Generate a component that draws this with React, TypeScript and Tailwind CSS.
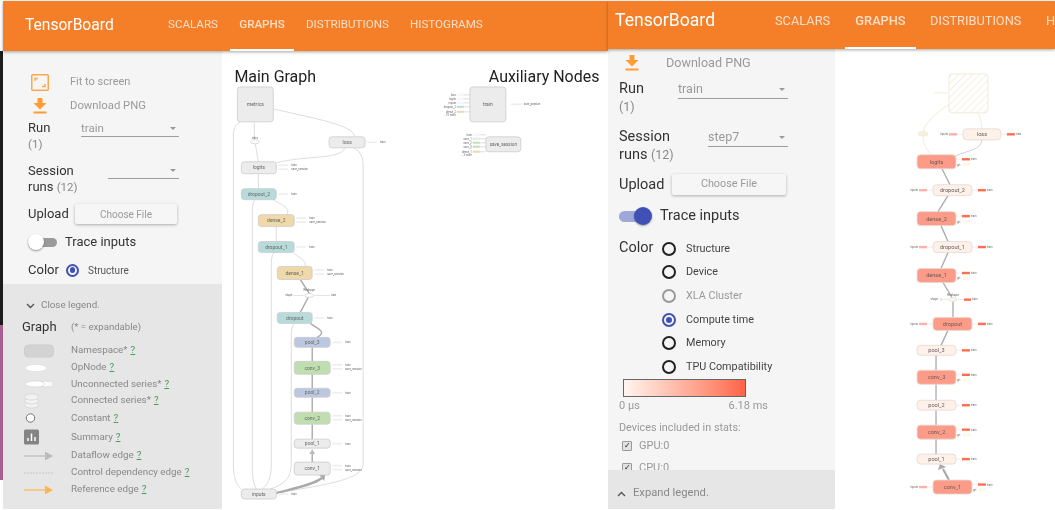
import React from 'react';

const TABS_LEFT = [
  { label: 'Scalars', className: 'w-[74px] pl-[12px] border-b-2 border-transparent' },
  { label: 'Graphs', className: 'w-[64px] justify-center border-b-2 border-white text-white font-medium' },
  { label: 'Distributions', className: 'w-[104px] pl-[12px] border-b-2 border-transparent' },
  { label: 'Histograms', className: 'w-[84px] pl-[12px] border-b-2 border-transparent' },
];

const TABS_RIGHT = [
  { label: 'Scalars', className: 'w-[85px] pl-[15px] border-b-2 border-transparent' },
  { label: 'Graphs', className: 'w-[71px] justify-center border-b-2 border-white text-white font-medium' },
  { label: 'Distributions', className: 'w-[116px] pl-[14px] border-b-2 border-transparent' },
  { label: 'Histograms', className: 'w-[100px] pl-[14px] border-b-2 border-transparent' },
];

const GRAPH_NODES = [
  { x: 237, y: 87, w: 36, h: 35, label: 'metrics', fill: '#ececec', size: 5.2 },
  { x: 329, y: 137, w: 36, h: 11, label: 'loss', fill: '#ececec', size: 5 },
  { x: 241, y: 162, w: 35, h: 12, label: 'logits', fill: '#ececec', size: 5 },
  { x: 241, y: 189, w: 35, h: 11, label: 'dropout_2', fill: '#b7dada', size: 5 },
  { x: 258, y: 215, w: 36, h: 12, label: 'dense_2', fill: '#f0d9a8', size: 5 },
  { x: 258, y: 242, w: 36, h: 11, label: 'dropout_1', fill: '#b7dada', size: 5 },
  { x: 277, y: 267, w: 35, h: 13, label: 'dense_1', fill: '#f0d9a8', size: 5 },
  { x: 277, y: 313, w: 35, h: 11, label: 'dropout', fill: '#b7dada', size: 5 },
  { x: 294, y: 338, w: 36, h: 10, label: 'pool_3', fill: '#bcc8e0', size: 5 },
  { x: 294, y: 362, w: 36, h: 13, label: 'conv_3', fill: '#c0dfb0', size: 5 },
  { x: 294, y: 389, w: 36, h: 9, label: 'pool_2', fill: '#bcc8e0', size: 5 },
  { x: 294, y: 413, w: 36, h: 12, label: 'conv_2', fill: '#c0dfb0', size: 5 },
  { x: 294, y: 440, w: 36, h: 9, label: 'pool_1', fill: '#ececec', size: 5 },
  { x: 294, y: 463, w: 36, h: 13, label: 'conv_1', fill: '#ececec', size: 5 },
  { x: 241, y: 490, w: 35, h: 10, label: 'inputs', fill: '#ececec', size: 5 },
  { x: 470, y: 87, w: 36, h: 35, label: 'train', fill: '#ececec', size: 5 },
  { x: 486, y: 137, w: 35, h: 15, label: 'save_session', fill: '#ececec', size: 4.6 },
];

const THIN_EDGES = [
  'M355,137 C352,125 320,120 273,109',
  'M276,163 C310,155 340,160 345,148',
  'M241,490 C235,485 233,478 233,465 L233,135 C233,128 236,124 240,122',
  'M256,490 C253,485 252,478 252,465 L252,210 C252,205 253,202 255,200',
  'M262,490 C268,485 271,478 271,465 L271,265 C271,258 272,255 274,253',
  'M270,490 C285,485 291,478 291,465 L291,335 C291,330 292,327 294,324',
  'M276,494 C330,485 363,480 363,465 L363,165 C363,155 358,150 353,148',
  'M254,122 L254,140',
  'M255,144 L258,162',
  'M258,189 L258,174',
  'M287,215 C290,207 280,205 273,200',
  'M276,242 L276,227',
  'M305,267 C306,260 298,258 293,253',
];

const THICK_EDGES = [
  'M300,280 L309,294',
  'M308,298 L300,313',
  'M317,338 C327,332 318,330 310,324',
  'M312,362 L312,348',
  'M312,389 L312,375',
  'M312,413 L312,398',
  'M312,440 L312,425',
  'M312,463 L312,453',
];

const AUX_LEFT = [
  { y: 95, label: 'loss', fill: '#fff' },
  { y: 99, label: 'logits', fill: '#fff' },
  { y: 103, label: 'inputs', fill: '#fff' },
  { y: 107, label: 'dropout_2', fill: '#b7dada' },
  { y: 112, label: 'dense_2', fill: '#f0d9a8' },
  { y: 115, label: '... 10 more', fill: 'none' },
  { y: 135, label: 'train', fill: '#fff' },
  { y: 139, label: 'conv_1', fill: '#ececec' },
  { y: 143, label: 'conv_2', fill: '#c0dfb0' },
  { y: 147, label: 'conv_3', fill: '#c0dfb0' },
  { y: 152, label: 'dense_1', fill: '#f0d9a8' },
  { y: 155, label: '... 3 more', fill: 'none' },
];

const CORAL = '#fc9c88';
const PALE = '#fdf1ea';

const TIME_NODES = [
  { x: 963, y: 129, w: 38, h: 11, label: 'loss', fill: PALE, inputs: true },
  { x: 917, y: 155, w: 39, h: 14, label: 'logits', fill: CORAL, grad: true },
  { x: 933, y: 185, w: 39, h: 11, label: 'dropout_2', fill: PALE, inputs: true },
  { x: 917, y: 212, w: 39, h: 14, label: 'dense_2', fill: CORAL, grad: true },
  { x: 933, y: 242, w: 39, h: 11, label: 'dropout_1', fill: PALE, inputs: true },
  { x: 917, y: 269, w: 39, h: 14, label: 'dense_1', fill: CORAL, grad: true },
  { x: 933, y: 318, w: 39, h: 13, label: 'dropout', fill: CORAL, inputs: true },
  { x: 917, y: 346, w: 39, h: 10, label: 'pool_3', fill: PALE },
  { x: 917, y: 371, w: 39, h: 14, label: 'conv_3', fill: CORAL, grad: true },
  { x: 917, y: 401, w: 39, h: 10, label: 'pool_2', fill: PALE },
  { x: 917, y: 426, w: 39, h: 14, label: 'conv_2', fill: CORAL, grad: true },
  { x: 917, y: 455, w: 39, h: 10, label: 'pool_1', fill: PALE },
  { x: 933, y: 481, w: 39, h: 14, label: 'conv_1', fill: CORAL, inputs: true, grad: true },
];

const TIME_EDGES = [
  'M942,169 L950,185',
  'M948,196 L938,212',
  'M941,226 L948,242',
  'M948,253 L941,269',
  'M943,283 L952,298',
  'M953,302 L953,318',
  'M948,331 L941,346',
  'M936,356 L936,371',
  'M936,385 L936,401',
  'M936,411 L936,426',
  'M936,440 L936,455',
];

const Arrow = ({ x, y, fill = '#bbb', size = 2 }: { x: number; y: number; fill?: string; size?: number }) => (
  <polygon fill={fill} points={`${x - size},${y + size * 1.6} ${x + size},${y + size * 1.6} ${x},${y}`} />
);

const MainGraph = () => (
  <svg className="block h-full w-full" viewBox="222 51 386 459">
    <text x="234" y="82" fontSize="16" fill="#222">Main Graph</text>
    <text x="489" y="82" fontSize="16" fill="#222">Auxiliary Nodes</text>

    {THIN_EDGES.map((d) => (
      <path key={d} d={d} fill="none" stroke="#d4d4d4" strokeWidth="0.8" />
    ))}
    {THICK_EDGES.map((d) => (
      <path key={d} d={d} fill="none" stroke="#aaa" strokeWidth="1.4" />
    ))}
    <path d="M276,494 C295,489 312,486 322,479" fill="none" stroke="#aaa" strokeWidth="2.4" />
    <polygon points="325,476 319,476 324,482" fill="#aaa" />
    <Arrow x={312} y={450} size={3} />

    {/* reshape op */}
    <ellipse cx="254.5" cy="142" rx="4.5" ry="2" fill="#fff" stroke="#bbb" strokeWidth="0.5" />
    <text x="254.5" y="139" fontSize="2.6" textAnchor="middle" fill="#666">index</text>
    <ellipse cx="309" cy="296" rx="4.5" ry="2" fill="#fff" stroke="#bbb" strokeWidth="0.5" />
    <text x="309" y="292" fontSize="3" textAnchor="middle" fill="#666">Reshape</text>
    <text x="292" y="297" fontSize="2.6" textAnchor="end" fill="#666">shape</text>
    <path d="M293,296 L304,296 M314,296 L330,296" stroke="#ddd" strokeWidth="0.8" />
    <text x="331" y="297" fontSize="2.6" fill="#666">train</text>

    {GRAPH_NODES.map((n) => (
      <g key={n.label}>
        <rect x={n.x} y={n.y} width={n.w} height={n.h} rx="3" fill={n.fill} stroke="#ccc" strokeWidth="0.8" />
        <text x={n.x + n.w / 2} y={n.y + n.h / 2 + 1.7} fontSize={n.size} textAnchor="middle" fill="#666">
          {n.label}
        </text>
      </g>
    ))}

    {/* out-of-graph stubs */}
    {GRAPH_NODES.slice(1, 15).map((n) => {
      const isGated = /logits|dense|conv/.test(n.label);
      const stubX = n.x + n.w + 2;
      const cy = n.y + (isGated ? 3.5 : n.h / 2);
      return (
        <g key={n.label}>
          <rect x={stubX} y={cy - 0.8} width="10" height="1.6" fill="#eee" />
          <text x={stubX + 13} y={cy + 1} fontSize="2.8" fill="#666">train</text>
          {isGated && (
            <>
              <rect x={stubX} y={cy + 3.2} width="10" height="1.6" fill="#eee" />
              <text x={stubX + 13} y={cy + 5} fontSize="2.8" fill="#666">save_session</text>
            </>
          )}
        </g>
      );
    })}

    {AUX_LEFT.map((a) => {
      const nodeX = a.y < 120 ? 470 : 486;
      return (
        <g key={a.label}>
          {a.fill !== 'none' && (
            <rect x={nodeX - 13} y={a.y - 0.9} width="7" height="1.8" fill={a.fill} stroke="#ddd" strokeWidth="0.3" />
          )}
          {a.fill !== 'none' && <path d={`M${nodeX - 6},${a.y} L${nodeX},${a.y}`} stroke="#aaa" strokeWidth="0.4" />}
          <text x={nodeX - 14} y={a.y + 1} fontSize="2.7" textAnchor="end" fill="#666">
            {a.label}
          </text>
        </g>
      );
    })}
    <rect x="511" y="103.5" width="11" height="1.8" fill="#eee" />
    <text x="524" y="105.5" fontSize="2.8" fill="#666">save_session</text>
  </svg>
);

const TimeGraph = () => (
  <svg className="block h-full w-full" viewBox="835 49 220 461">
    <defs>
      <pattern id="hatch" width="5" height="5" patternUnits="userSpaceOnUse" patternTransform="rotate(45)">
        <line x1="0" y1="0" x2="0" y2="5" stroke="#f1e9d4" strokeWidth="1.4" />
      </pattern>
    </defs>

    <rect x="949" y="74" width="39" height="39" rx="3" fill="url(#hatch)" stroke="#efe6cf" strokeWidth="0.8" />
    <path d="M934,93 L948,93" stroke="#e8e0c8" strokeWidth="0.6" />
    <path d="M931,155 C924,147 923,140 923,134 C923,124 937,112 949,105" fill="none" stroke="#e9e1c6" strokeWidth="0.7" />
    <path d="M982,129 C982,124 981,118 978,113" fill="none" stroke="#e9e1c6" strokeWidth="0.7" />
    <ellipse cx="923" cy="134" rx="5" ry="2.2" fill="#f6f1df" stroke="#e9e1c6" strokeWidth="0.5" />
    <path d="M956,156 C970,150 981,150 982,140" fill="none" stroke="#ccc" strokeWidth="0.9" />

    {TIME_EDGES.map((d) => (
      <path key={d} d={d} fill="none" stroke="#aaa" strokeWidth="1.3" />
    ))}
    <path d="M949,481 L943,470" stroke="#aaa" strokeWidth="2.2" />
    <polygon points="940,465 938,471 946,468" fill="#aaa" />

    {/* reshape op */}
    <ellipse cx="953" cy="300" rx="4.5" ry="2" fill={PALE} stroke="#ddd" strokeWidth="0.5" />
    <text x="953" y="297" fontSize="3" textAnchor="middle" fill="#666">Reshape</text>
    <text x="938" y="301" fontSize="2.8" textAnchor="end" fill="#666">shape</text>
    <circle cx="941" cy="300" r="1" fill="#fff" stroke="#bbb" strokeWidth="0.4" />
    <path d="M942,300 L948,300 M958,300 L964,300" stroke="#ddd" strokeWidth="0.6" />
    <rect x="964" y="299" width="7" height="2.4" fill="#ff6e54" />
    <text x="972" y="301" fontSize="2.8" fill="#666">train</text>

    {TIME_NODES.map((n) => {
      const right = n.x + n.w;
      const cy = n.y + (n.grad ? 4.5 : n.h / 2);
      return (
        <g key={n.label}>
          <rect x={n.x} y={n.y} width={n.w} height={n.h} rx="3.5" fill={n.fill} stroke="#e6d8d0" strokeWidth="0.8" />
          <text x={n.x + n.w / 2} y={n.y + n.h / 2 + 2} fontSize="5.6" textAnchor="middle" fill="#665a58">
            {n.label}
          </text>
          <path d={`M${right},${cy} L${right + 6},${cy}`} stroke="#ddd" strokeWidth="0.5" />
          <rect x={right + 6} y={cy - 1.2} width="8" height="2.4" fill="#ff6e54" />
          <text x={right + 15} y={cy + 1} fontSize="2.8" fill="#666">train</text>
          {n.grad && (
            <>
              <text x={right + 1} y={cy + 6.5} fontSize="2.8" fill="#666">grt</text>
              <rect x={right + 7} y={cy + 4} width="7" height="2.4" fill="#fdfbe8" stroke="#eee8c8" strokeWidth="0.2" />
            </>
          )}
          {n.inputs && (
            <>
              <text x={n.x - 15} y={n.y + n.h / 2 + 1} fontSize="2.8" textAnchor="end" fill="#666">inputs</text>
              <rect x={n.x - 14} y={n.y + n.h / 2 - 1.2} width="8" height="2.4" fill="#fbb3a6" />
              <path d={`M${n.x - 6},${n.y + n.h / 2} L${n.x},${n.y + n.h / 2}`} stroke="#ddd" strokeWidth="0.5" />
            </>
          )}
        </g>
      );
    })}
  </svg>
);

const Header = ({ tabs, big }: { tabs: { label: string; className: string }[]; big?: boolean }) => (
  <header
    className={`relative z-10 flex shrink-0 items-stretch overflow-hidden bg-[#f57f28] text-white shadow-[0_1px_3px_rgba(0,0,0,0.35)] ${
      big ? 'h-[48px] pl-[7px]' : 'h-[50px] pl-[22px]'
    }`}
  >
    <div className={`flex shrink-0 items-center ${big ? 'w-[145px] pb-[9px] text-[17.6px]' : 'w-[131px] text-[15.6px]'}`}>TensorBoard</div>
    {tabs.map((tab) => (
      <div
        key={tab.label}
        className={`flex shrink-0 items-center uppercase text-white/75 ${big ? 'pb-[7px] text-[12.8px]' : 'text-[11.6px]'} ${tab.className}`}
      >
        {tab.label}
      </div>
    ))}
  </header>
);

const FitIcon = () => (
  <svg width="18" height="17" viewBox="0 0 18 17" fill="none" stroke="#ffa74d">
    <rect x="0.75" y="0.75" width="16.5" height="15.5" rx="1" strokeWidth="1.5" />
    <path d="M4 7 V4.5 H7 M14 10 V12.5 H11" strokeWidth="1.4" />
  </svg>
);

const DownloadIcon = () => (
  <svg width="14" height="16" viewBox="0 0 14 16" fill="#ff9c33">
    <path d="M4.5 0 H9.5 V5 H13.5 L7 11.5 L0.5 5 H4.5 Z" />
    <rect x="0.5" y="13.5" width="13" height="2" />
  </svg>
);

const Caret = () => <span className="h-0 w-0 border-x-[3px] border-t-[3px] border-x-transparent border-t-[#999]" />;

const Dropdown = ({ value, className }: { value?: string; className: string }) => (
  <div className={`flex items-center justify-between border-b border-[#9e9e9e] pr-[3px] text-[#9a9a9a] ${className}`}>
    <span>{value}</span>
    <Caret />
  </div>
);

const Radio = ({ selected, muted, size }: { selected?: boolean; muted?: boolean; size: string }) => (
  <span
    className={`flex shrink-0 items-center justify-center rounded-full border-2 ${size} ${
      selected ? 'border-[#3f51b5]' : muted ? 'border-[#9a9a9a]' : 'border-[#222]'
    }`}
  >
    {selected && <span className="h-[58%] w-[58%] rounded-full bg-[#3f51b5]" />}
  </span>
);

const Help = () => <span className="ml-[3px] text-[#4a9a5a] underline">?</span>;

const LEGEND_ROWS: { label: string; height: string; icon: React.ReactNode }[] = [
  {
    label: 'Namespace*',
    height: 'h-[17px]',
    icon: <rect x="0.5" y="2" width="29" height="12" rx="4" fill="#d3d3d3" stroke="#ccc" />,
  },
  {
    label: 'OpNode',
    height: 'h-[17px]',
    icon: <ellipse cx="12" cy="8" rx="11" ry="3.6" fill="#fff" stroke="#d8d8d8" strokeWidth="0.6" />,
  },
  {
    label: 'Unconnected series*',
    height: 'h-[16px]',
    icon: (
      <g fill="#fff" stroke="#d0d0d0" strokeWidth="0.6">
        <ellipse cx="25" cy="8" rx="4" ry="3" />
        <ellipse cx="21" cy="8" rx="5" ry="3" />
        <ellipse cx="11" cy="8" rx="10" ry="3" />
      </g>
    ),
  },
  {
    label: 'Connected series*',
    height: 'h-[17px]',
    icon: (
      <g fill="#f2f2f2" stroke="#d0d0d0" strokeWidth="0.6">
        <ellipse cx="7.5" cy="12" rx="7" ry="3" />
        <ellipse cx="7.5" cy="8" rx="7" ry="3" />
        <ellipse cx="7.5" cy="4" rx="7" ry="3" />
      </g>
    ),
  },
  {
    label: 'Constant',
    height: 'h-[18px]',
    icon: <circle cx="6.5" cy="8" r="4.2" fill="#fff" stroke="#555" strokeWidth="0.8" />,
  },
  {
    label: 'Summary',
    height: 'h-[20px]',
    icon: (
      <g>
        <rect x="0" y="0.5" width="15" height="15" rx="1.5" fill="#848484" />
        <path d="M4 12 V9 M7.5 12 V4.5 M11 12 V8" stroke="#fff" strokeWidth="1.5" />
      </g>
    ),
  },
  {
    label: 'Dataflow edge',
    height: 'h-[17px]',
    icon: (
      <g fill="#bbb">
        <rect x="0" y="7.4" width="23" height="1.2" />
        <polygon points="21,3.5 29,8 21,12.5" />
      </g>
    ),
  },
  {
    label: 'Control dependency edge',
    height: 'h-[17px]',
    icon: <path d="M0 8 H29" stroke="#c8c8c8" strokeWidth="1" strokeDasharray="2 1" />,
  },
  {
    label: 'Reference edge',
    height: 'h-[17px]',
    icon: (
      <g fill="#ffb74d">
        <rect x="0" y="7.4" width="23" height="1.2" />
        <polygon points="21,3.5 29,8 21,12.5" />
      </g>
    ),
  },
];

const LeftSidebar = () => (
  <aside className="flex h-full w-[219px] shrink-0 flex-col bg-[#f5f5f5]">
    <div className="h-[233px] shrink-0 overflow-hidden pl-[25px] pt-[19px] text-[13px] text-[#333]">
      <div className="flex h-[24px] items-center">
        <div className="ml-[3px] w-[39px]"><FitIcon /></div>
        <span className="text-[11px] text-[#9a9a9a]">Fit to screen</span>
      </div>
      <div className="flex h-[24px] items-center">
        <div className="ml-[5px] w-[37px]"><DownloadIcon /></div>
        <span className="text-[11.3px] text-[#9a9a9a]">Download PNG</span>
      </div>

      <div className="mt-[2px] flex leading-[16px]">
        <div className="w-[53px]">
          Run
          <div className="text-[11.5px] text-[#8a8a8a]">(1)</div>
        </div>
        <Dropdown value="train" className="h-[17px] w-[98px] text-[11.5px]" />
      </div>

      <div className="mt-[11px] flex leading-[16px]">
        <div className="w-[80px]">
          Session
          <div>
            runs <span className="text-[11.5px] text-[#8a8a8a]">(12)</span>
          </div>
        </div>
        <Dropdown className="h-[16px] w-[71px]" />
      </div>

      <div className="mt-[9px] flex h-[20px] items-center">
        <span className="w-[47px]">Upload</span>
        <button className="h-[20px] w-[102px] rounded-[2px] bg-[#f6f6f6] text-[10px] text-[#9a9a9a] shadow-[0_1px_3px_rgba(0,0,0,0.3)]">
          Choose File
        </button>
      </div>

      <div className="mt-[10px] flex h-[16px] items-center">
        <div className="flex w-[37px] items-center">
          <div className="relative h-[9px] w-[29px] rounded-full bg-[#9a9a9a]">
            <span className="absolute left-0 top-[-3.5px] h-[16px] w-[16px] rounded-full bg-white shadow-[0_1px_2px_rgba(0,0,0,0.4)]" />
          </div>
        </div>
        <span>Trace inputs</span>
      </div>

      <div className="mt-[12px] flex h-[16px] items-center">
        <span className="w-[38px]">Color</span>
        <Radio selected size="h-[13px] w-[13px]" />
        <span className="ml-[9px] text-[10px] text-[#555]">Structure</span>
      </div>
    </div>

    <div className="flex-1 overflow-hidden bg-[#e6e6e6] pl-[19px] pt-[14.5px] text-[9.8px] text-[#888]">
      <div className="flex h-[14px] items-center pl-[4px]">
        <svg width="9" height="6" viewBox="0 0 9 6" fill="none" stroke="#555" strokeWidth="1.4">
          <path d="M1 1 L4.5 4.5 L8 1" />
        </svg>
        <span className="ml-[6px]">Close legend.</span>
      </div>
      <div className="mt-[5.5px] flex h-[18px] items-center">
        <span className="w-[49px] text-[13px] text-[#333]">Graph</span>
        <span className="text-[9.6px]">(* = expandable)</span>
      </div>
      <div className="mt-[6px]">
        {LEGEND_ROWS.map((row) => (
          <div key={row.label} className={`flex items-center ${row.height}`}>
            <div className="w-[49px] pl-[2px]">
              <svg className="block" width="30" height="16" viewBox="0 0 30 16">
                {row.icon}
              </svg>
            </div>
            <span>
              {row.label}
              <Help />
            </span>
          </div>
        ))}
      </div>
    </div>
  </aside>
);

const COLOR_MODES = [
  { label: 'Structure' },
  { label: 'Device' },
  { label: 'XLA Cluster', muted: true },
  { label: 'Compute time', selected: true },
  { label: 'Memory' },
  { label: 'TPU Compatibility' },
];

const Device = ({ name, className }: { name: string; className: string }) => (
  <div className={`flex h-[14px] items-center pl-[3px] ${className}`}>
    <span className="flex h-[10px] w-[10px] items-center justify-center rounded-[1px] border border-[#999] bg-[#e2e2e2] text-[8px] leading-none text-[#222]">
      ✓
    </span>
    <span className="ml-[7px]">{name}</span>
  </div>
);

const RightSidebar = () => (
  <aside className="flex h-full w-[227px] shrink-0 flex-col bg-[#f5f5f5]">
    <div className="min-h-0 flex-1 overflow-hidden pl-[11px] pt-[2px] text-[14.5px] text-[#333]">
      <div className="flex h-[24px] items-center">
        <div className="ml-[6px] w-[41px]"><DownloadIcon /></div>
        <span className="text-[12.6px] text-[#9a9a9a]">Download PNG</span>
      </div>

      <div className="mt-[5px] flex leading-[18px]">
        <div className="w-[59px]">
          Run
          <div className="text-[12.5px] text-[#8a8a8a]">(1)</div>
        </div>
        <Dropdown value="train" className="h-[19px] w-[110px] text-[12.5px]" />
      </div>

      <div className="mt-[12px] flex leading-[18px]">
        <div className="w-[89px]">
          Session
          <div>
            runs <span className="text-[12.5px] text-[#8a8a8a]">(12)</span>
          </div>
        </div>
        <Dropdown value="step7" className="h-[19px] w-[80px] text-[12.5px]" />
      </div>

      <div className="mt-[10px] flex h-[21px] items-center">
        <span className="w-[53px]">Upload</span>
        <button className="h-[21px] w-[114px] rounded-[2px] bg-[#f6f6f6] text-[10.8px] text-[#9a9a9a] shadow-[0_1px_3px_rgba(0,0,0,0.3)]">
          Choose File
        </button>
      </div>

      <div className="mt-[11px] flex h-[20px] items-center">
        <div className="flex w-[41px] items-center">
          <div className="relative h-[11px] w-[31px] rounded-full bg-[#9fa8da]">
            <span className="absolute right-[-2px] top-[-3.5px] h-[18px] w-[18px] rounded-full bg-[#3f51b5] shadow-[0_1px_2px_rgba(0,0,0,0.35)]" />
          </div>
        </div>
        <span>Trace inputs</span>
      </div>

      <div className="mt-[11px] flex">
        <span className="w-[43px] leading-[22px]">Color</span>
        <div>
          {COLOR_MODES.map((mode) => (
            <div key={mode.label} className="flex h-[23.67px] items-center">
              <Radio selected={mode.selected} muted={mode.muted} size="h-[14px] w-[14px]" />
              <span className={`ml-[10px] text-[10.8px] ${mode.muted ? 'text-[#9a9a9a]' : 'text-[#444]'}`}>{mode.label}</span>
            </div>
          ))}
        </div>
      </div>

      <div className="ml-[4px] h-[18px] w-[123px] border border-[#666] bg-gradient-to-r from-[#fff5f0] to-[#ff6347]" />
      <div className="mt-[2px] flex h-[14px] w-[149px] items-center justify-between text-[11px] text-[#999]">
        <span>0 µs</span>
        <span>6.18 ms</span>
      </div>
      <div className="mt-[8px] flex h-[14px] items-center text-[10.8px] text-[#999]">Devices included in stats:</div>
      <div className="text-[11px] text-[#999]">
        <Device name="GPU:0" className="mt-[4px]" />
        <Device name="CPU:0" className="mt-[8px]" />
      </div>
    </div>

    <div className="flex h-[39px] shrink-0 items-center bg-[#e6e6e6] pl-[9px] pt-[8px] text-[11.2px] text-[#888]">
      <svg width="9" height="6" viewBox="0 0 9 6" fill="none" stroke="#555" strokeWidth="1.4">
        <path d="M1 5 L4.5 1.5 L8 5" />
      </svg>
      <span className="ml-[7px]">Expand legend.</span>
    </div>
  </aside>
);

const App = () => {
  return (
    <div className="flex h-[510px] w-[1055px] overflow-hidden bg-white py-px font-['Roboto',sans-serif] blur-[0.4px]">
      {/* Left window edge behind the screenshot */}
      <div className="flex w-[3px] shrink-0 flex-col">
        <div className="h-[50px] bg-white" />
        <div className="h-[274px] bg-[#1c1c1c]" />
        <div className="h-[155px] bg-[#a5608f]" />
      </div>

      {/* First screenshot */}
      <section className="flex w-[605px] shrink-0 flex-col">
        <Header tabs={TABS_LEFT} />
        <div className="flex min-h-0 flex-1">
          <LeftSidebar />
          <main className="min-w-0 flex-1"><MainGraph /></main>
        </div>
      </section>

      {/* Second screenshot */}
      <section className="flex w-[447px] shrink-0 flex-col">
        <Header tabs={TABS_RIGHT} big />
        <div className="flex min-h-0 flex-1">
          <RightSidebar />
          <main className="min-w-0 flex-1"><TimeGraph /></main>
        </div>
      </section>
    </div>
  );
};

export default App;
